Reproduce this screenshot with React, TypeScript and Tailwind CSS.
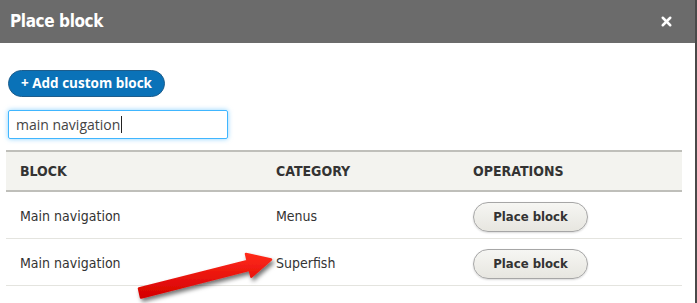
import { X } from 'lucide-react'

const rows = [
  { block: 'Main navigation', category: 'Menus' },
  { block: 'Main navigation', category: 'Superfish' },
]

function PlaceButton() {
  return (
    <button
      type="button"
      className="h-[30px] w-[115px] rounded-full border border-[#a6a6a6] bg-gradient-to-b from-[#f6f6f3] to-[#e7e6e0] text-[13px] font-bold text-[#333] shadow-[0_1px_2px_rgba(0,0,0,0.15)]"
    >
      Place block
    </button>
  )
}

function Arrow() {
  return (
    <svg
      className="pointer-events-none absolute left-0 top-0"
      width="697"
      height="303"
      viewBox="0 0 697 303"
    >
      <defs>
        <filter id="sh" x="-20%" y="-50%" width="140%" height="200%">
          <feDropShadow dx="2" dy="3" stdDeviation="2" floodColor="#000" floodOpacity="0.55" />
        </filter>
        <linearGradient id="rg" x1="0" y1="0" x2="0" y2="1">
          <stop offset="0" stopColor="#ff2a1a" />
          <stop offset="1" stopColor="#d40000" />
        </linearGradient>
      </defs>
      <polygon
        filter="url(#sh)"
        fill="url(#rg)"
        stroke="url(#rg)"
        strokeWidth="2.5"
        strokeLinejoin="round"
        points="141,297.5 139,288.5 247.7,261 246,254 271,259.5 251.4,276.6 249.7,269.8"
      />
    </svg>
  )
}

export default function App() {
  return (
    <div className="relative flex h-[303px] w-[697px] overflow-hidden bg-[#4a4a4a] font-['DejaVu_Sans_Condensed','DejaVu_Sans',sans-serif]">
      <div className="flex w-[695px] flex-col bg-white">
        <div className="flex h-[43px] items-center justify-between bg-[#6b6b6b] pl-[10px] pr-[21px]">
          <h2 className="text-[17px] font-bold tracking-[-0.4px] text-white">Place block</h2>
          <X className="h-[15px] w-[15px] text-white" strokeWidth={4} />
        </div>

        <div className="px-[8px] pt-[27px]">
          <button
            type="button"
            className="flex h-[27px] items-center rounded-full border border-[#1d5d8c] bg-[#0a72b8] px-[12px] font-['Open_Sans',sans-serif] text-[13.5px] font-bold text-white"
          >
            + Add custom block
          </button>
          <div className="mt-[13px] flex h-[29px] w-[220px] items-center rounded-[2px] border border-[#40b6ff] px-[7px] font-['Open_Sans',sans-serif] text-[14px] text-[#444] shadow-[0_0_5px_rgba(64,182,255,0.6)]">
            main navigation
            <span className="ml-[1px] h-[17px] w-px bg-[#222]" />
          </div>
        </div>

        <div className="ml-[6px] mt-[11px] w-[676px] text-[14px] text-[#333]">
          <div className="flex h-[42px] items-center border-y-2 border-[#bfbfba] bg-[#f3f3ef] text-[14px] font-bold text-[#333]">
            <div className="w-[257px] pl-[14px]">BLOCK</div>
            <div className="w-[197px] pl-[13px]">CATEGORY</div>
            <div className="pl-[13px]">OPERATIONS</div>
          </div>
          {rows.map(r => (
            <div key={r.category} className="flex h-[47px] items-center border-b border-[#e4e4df] pt-[3px]">
              <div className="w-[257px] pl-[14px]">{r.block}</div>
              <div className="w-[197px] pl-[13px]">{r.category}</div>
              <div className="pl-[13px]">
                <PlaceButton />
              </div>
            </div>
          ))}
        </div>
      </div>
      <Arrow />
    </div>
  )
}
